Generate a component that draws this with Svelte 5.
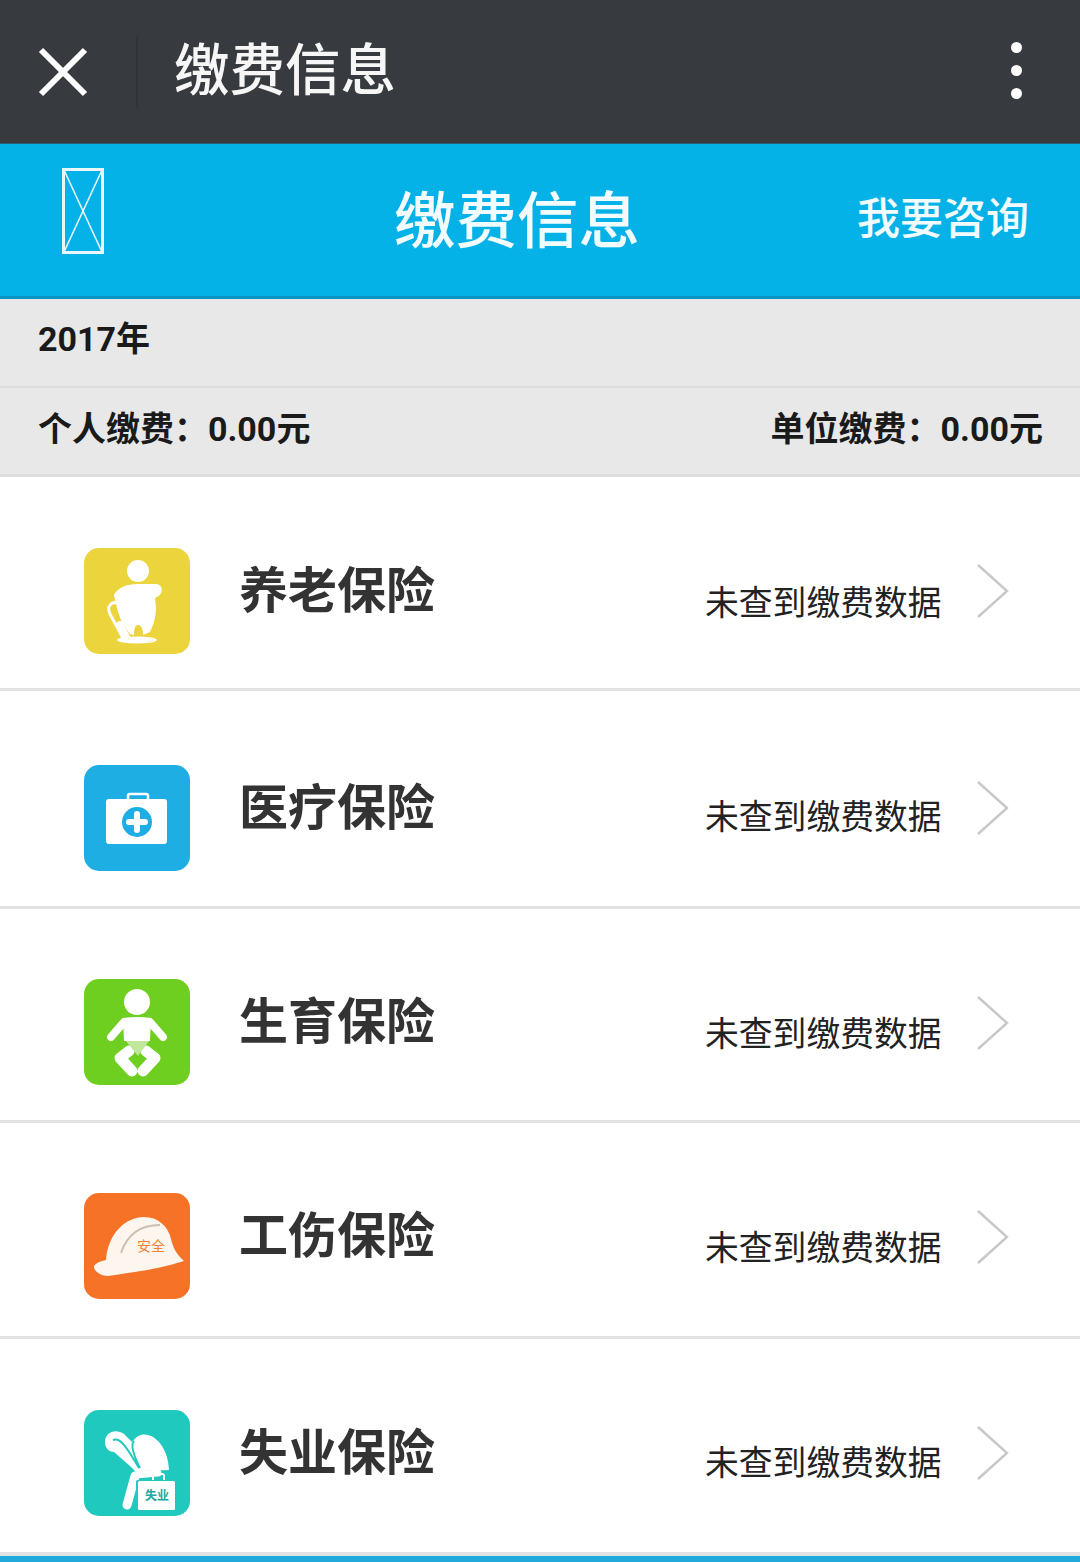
<script>
  const rows = [
    { name: '养老保险', icon: 'elder', color: '#ebd43c', h: 214, top: 71, status: 41, chev: 16 },
    { name: '医疗保险', icon: 'med', color: '#1eaee4', h: 218, top: 74, status: 38, chev: 16 },
    { name: '生育保险', icon: 'baby', color: '#6fcf20', h: 214, top: 70, status: 41, chev: 17 },
    { name: '工伤保险', icon: 'helmet', color: '#f57226', h: 216, top: 70, status: 41, chev: 17 },
    { name: '失业保险', icon: 'jobless', color: '#1fc9bd', h: 216, top: 71, status: 39, chev: 16 }
  ];
</script>

<main class="page">
  <header class="wxbar">
    <svg class="close" viewBox="0 0 50 50" width="50" height="50" aria-hidden="true">
      <path d="M3 3 47 47M47 3 3 47" />
    </svg>
    <span class="divider"></span>
    <h1 class="wxtitle">缴费信息</h1>
    <div class="dots"><i></i><i></i><i></i></div>
  </header>

  <section class="apphead">
    <svg class="tofu" viewBox="0 0 42 86" width="42" height="86" aria-hidden="true">
      <rect x="1.5" y="1.5" width="39" height="83" />
      <path d="M2 2 40 84M40 2 2 84" />
    </svg>
    <h2 class="apptitle">缴费信息</h2>
    <a class="consult">我要咨询</a>
  </section>

  <section class="year">2017年</section>
  <section class="summary">
    <span>个人缴费：0.00元</span>
    <span>单位缴费：0.00元</span>
  </section>

  <ul class="list">
    {#each rows as r}
      <li class="row" style="height:{r.h}px;padding-top:{r.top}px">
        <div class="icon" style="background:{r.color}">
          <svg viewBox="0 0 106 106" width="106" height="106" aria-hidden="true">
            {#if r.icon === 'elder'}
              <circle cx="54" cy="23" r="11" fill="#fff" />
              <path fill="#fff" d="M30 47C34 39 44 36 54 36L73 36C80 38 79 46 73 49L71 50C73 62 72 72 66 84L59 87C59 80 57 77 54 77 51 77 50 81 50 87L46 86C40 78 36 72 33 60Z" />
              <ellipse cx="53" cy="92" rx="20" ry="3.5" fill="#fff" />
              <path d="M36 56C28 52 22 58 26 66L39 90" fill="none" stroke="#fff" stroke-width="3" stroke-linecap="round" />
              <path d="M36 76 43 89" fill="none" stroke="#fff" stroke-width="6" stroke-linecap="round" />
            {:else if r.icon === 'med'}
              <rect x="44" y="29" width="20" height="8" rx="2" fill="none" stroke="#fff" stroke-width="2.5" />
              <rect x="22" y="34" width="61" height="45" rx="3" fill="#fff" />
              <circle cx="53" cy="57" r="15" fill="#1eaee4" />
              <path d="M53 49V65M45 57H61" stroke="#fff" stroke-width="6" stroke-linecap="round" />
            {:else if r.icon === 'baby'}
              <circle cx="53" cy="23" r="13" fill="#fff" />
              <path fill="#fff" d="M39 39Q53 37 67 39L66 62H40Z" />
              <path d="M40 43 27 58M66 43 79 58" stroke="#fff" stroke-width="8" stroke-linecap="round" fill="none" />
              <path d="M45 72 36 79 48 92M62 72 71 79 59 92" stroke="#fff" stroke-width="11" stroke-linecap="round" stroke-linejoin="round" fill="none" />
              <path d="M42 62H65L54 77Z" fill="#c1e89a" />
            {:else if r.icon === 'helmet'}
              <path fill="#fdf6ef" d="M22 67C24 40 42 24 60 24 74 24 84 33 87 46 89 54 92 61 100 68 75 76 45 80 24 83 16 83 9 77 10 73 12 70 17 68 22 67Z" />
              <path d="M37 60C43 42 56 32 76 32" fill="none" stroke="#cbbfb2" stroke-width="2" />
              <text x="67" y="58" class="hattext">安全</text>
            {:else}
              <path fill="#fff" d="M21 32C21 22 32 18 40 24L48 32C60 14 84 30 85 60L58 61 54 64 46 56 30 42C25 42 21 38 21 32Z" />
              <path d="M29 30C36 27 42 36 55 58M50 31C46 35 50 46 56 58" fill="none" stroke="#1fc9bd" stroke-width="2" />
              <path d="M52 65 74 63" stroke="#fff" stroke-width="7" stroke-linecap="round" />
              <path d="M51 66 43 95" stroke="#fff" stroke-width="9" stroke-linecap="round" />
              <rect x="69" y="64" width="11" height="8" rx="2" fill="none" stroke="#fff" stroke-width="2" />
              <rect x="52" y="70" width="40" height="31" rx="1.5" fill="#1fc9bd" />
              <rect x="54" y="71" width="37" height="29" rx="1.5" fill="#fff" />
              <text x="73" y="90" class="casetext">失业</text>
            {/if}
          </svg>
        </div>
        <div class="name">{r.name}</div>
        <div class="status" style="margin-top:{r.status}px">未查到缴费数据</div>
        <svg class="chev" style="margin-top:{r.chev}px" viewBox="0 0 32 54" width="32" height="54" aria-hidden="true">
          <path d="M1 1 30 27 1 53" />
        </svg>
      </li>
    {/each}
  </ul>
  <div class="foot"></div>
</main>

<style>
  :global(body) {
    margin: 0;
    background: #fff;
  }
  .page {
    width: 1080px;
    height: 1562px;
    overflow: hidden;
    font-family: Roboto, "Noto Sans CJK SC", sans-serif;
    display: flex;
    flex-direction: column;
  }
  h1, h2, ul { margin: 0; padding: 0; font-weight: 400; }
  li { list-style: none; }

  .wxbar {
    height: 144px;
    flex: none;
    box-sizing: border-box;
    background: #373a3e;
    border-bottom: 1px solid #2b5f78;
    display: flex;
    align-items: center;
    color: #f6f6f6;
  }
  .close {
    margin-left: 38px;
    margin-right: 48px;
    flex: none;
  }
  .close path { stroke: #fff; stroke-width: 6; fill: none; }
  .divider {
    width: 2px;
    height: 72px;
    background: #313336;
    margin-right: 36px;
  }
  .wxtitle {
    font-size: 55.5px;
    line-height: 1;
    white-space: nowrap;
    font-weight: 500;
  }
  .dots {
    margin-left: auto;
    margin-right: 58px;
    display: flex;
    flex-direction: column;
    gap: 12px;
    margin-top: -2px;
  }
  .dots i {
    display: block;
    width: 11px;
    height: 11px;
    border-radius: 50%;
    background: #fff;
  }

  .apphead {
    height: 155px;
    flex: none;
    box-sizing: border-box;
    background: #05b2e7;
    border-bottom: 3px solid #0a94c4;
    display: flex;
    align-items: center;
    color: #f2fbfe;
    padding-left: 62px;
    padding-right: 51px;
  }
  .tofu {
    flex: none;
    margin-top: -18px;
    margin-right: 290px;
  }
  .tofu rect, .tofu path { fill: none; stroke: #e8f8fd; }
  .tofu rect { stroke-width: 3; }
  .tofu path { stroke-width: 1.6; }
  .apptitle {
    font-size: 61.5px;
    line-height: 1;
    white-space: nowrap;
    margin-top: 6px;
    font-weight: 500;
  }
  .consult {
    margin-left: auto;
    margin-top: -10px;
    font-size: 43px;
    white-space: nowrap;
    font-weight: 500;
  }

  .year, .summary {
    flex: none;
    box-sizing: border-box;
    background: #e8e8e9;
    color: #1a1a1a;
    font-weight: 700;
    font-size: 34px;
    padding-left: 38px;
    display: flex;
    align-items: center;
  }
  .year {
    height: 89px;
    border-bottom: 2px solid #dcdcdc;
    padding-bottom: 12px;
  }
  .summary {
    height: 89px;
    border-bottom: 3px solid #dedede;
    justify-content: space-between;
    padding-right: 37px;
    padding-bottom: 10px;
  }

  .list { flex: none; }
  .row {
    border-bottom: 3px solid #e3e3e3;
    display: flex;
    align-items: flex-start;
    background: #fff;
    box-sizing: border-box;
  }
  .icon {
    margin-left: 84px;
    width: 106px;
    height: 106px;
    border-radius: 15px;
    flex: none;
    overflow: hidden;
  }
  .icon svg { display: block; }
  .name {
    margin-left: 49px;
    margin-top: 14px;
    width: 466px;
    font-size: 49px;
    line-height: 60px;
    font-weight: 700;
    color: #333;
    white-space: nowrap;
    flex: none;
  }
  .status {
    font-size: 33.8px;
    line-height: 30px;
    color: #222;
    white-space: nowrap;
    width: 272px;
    flex: none;
  }
  .chev { flex: none; }
  .chev path { fill: none; stroke: #c8c8c8; stroke-width: 2.4; }
  .hattext {
    font-size: 14px;
    fill: #f0833a;
    text-anchor: middle;
    font-family: "Noto Sans CJK SC", sans-serif;
  }
  .casetext {
    font-size: 12px;
    fill: #1aa99f;
    text-anchor: middle;
    font-weight: 700;
    font-family: "Noto Sans CJK SC", sans-serif;
  }
  .foot {
    flex: 1;
    background: #22a9dc;
    border-top: 1px solid #d8e4e8;
  }
</style>
